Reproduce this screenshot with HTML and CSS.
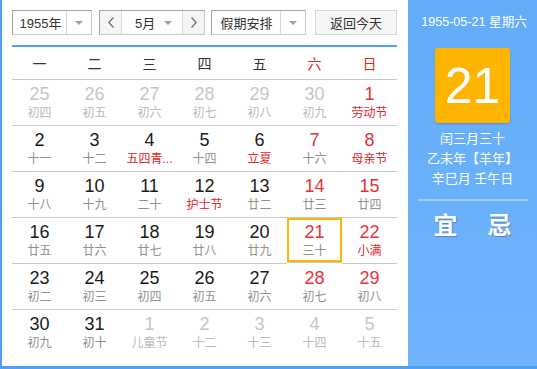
FILE: index.html
```html
<!DOCTYPE html>
<html lang="zh-CN">
<head>
  <meta charset="UTF-8">
  <title>万年历</title>
  <link rel="stylesheet" href="styles.css">
</head>
<body>

<div class="cal">
  <!-- left: month grid -->
  <div class="main">
    <div class="toolbar">
      <div class="sel year">
        <span class="sel-text">1955年</span>
        <span class="sel-arrow"><i class="tri"></i></span>
      </div>
      <div class="sel month">
        <span class="nav"><svg width="6" height="11" viewBox="0 0 6 11"><polyline points="5.5,0.5 0.8,5.5 5.5,10.5" fill="none" stroke="#666" stroke-width="1.1"/></svg></span>
        <span class="sel-text">5月</span>
        <span class="mini-arrow"><i class="tri"></i></span>
        <span class="nav"><svg width="6" height="11" viewBox="0 0 6 11"><polyline points="0.5,0.5 5.2,5.5 0.5,10.5" fill="none" stroke="#666" stroke-width="1.1"/></svg></span>
      </div>
      <div class="sel holiday">
        <span class="sel-text">假期安排</span>
        <span class="sel-arrow"><i class="tri"></i></span>
      </div>
      <button class="today-btn">返回今天</button>
    </div>

    <div class="week">
      <span>一</span><span>二</span><span>三</span><span>四</span><span>五</span><span class="wkend">六</span><span class="wkend">日</span>
    </div>

    <div class="grid">
      <div class="day other"><b>25</b><em>初四</em></div>
      <div class="day other"><b>26</b><em>初五</em></div>
      <div class="day other"><b>27</b><em>初六</em></div>
      <div class="day other"><b>28</b><em>初七</em></div>
      <div class="day other"><b>29</b><em>初八</em></div>
      <div class="day other"><b>30</b><em>初九</em></div>
      <div class="day red"><b>1</b><em class="fest">劳动节</em></div>

      <div class="day"><b>2</b><em>十一</em></div>
      <div class="day"><b>3</b><em>十二</em></div>
      <div class="day"><b>4</b><em class="fest">五四青...</em></div>
      <div class="day"><b>5</b><em>十四</em></div>
      <div class="day"><b>6</b><em class="fest">立夏</em></div>
      <div class="day red"><b>7</b><em>十六</em></div>
      <div class="day red"><b>8</b><em class="fest">母亲节</em></div>

      <div class="day"><b>9</b><em>十八</em></div>
      <div class="day"><b>10</b><em>十九</em></div>
      <div class="day"><b>11</b><em>二十</em></div>
      <div class="day"><b>12</b><em class="fest">护士节</em></div>
      <div class="day"><b>13</b><em>廿二</em></div>
      <div class="day red"><b>14</b><em>廿三</em></div>
      <div class="day red"><b>15</b><em>廿四</em></div>

      <div class="day"><b>16</b><em>廿五</em></div>
      <div class="day"><b>17</b><em>廿六</em></div>
      <div class="day"><b>18</b><em>廿七</em></div>
      <div class="day"><b>19</b><em>廿八</em></div>
      <div class="day"><b>20</b><em>廿九</em></div>
      <div class="day red now"><b>21</b><em>三十</em></div>
      <div class="day red"><b>22</b><em class="fest">小满</em></div>

      <div class="day"><b>23</b><em>初二</em></div>
      <div class="day"><b>24</b><em>初三</em></div>
      <div class="day"><b>25</b><em>初四</em></div>
      <div class="day"><b>26</b><em>初五</em></div>
      <div class="day"><b>27</b><em>初六</em></div>
      <div class="day red"><b>28</b><em>初七</em></div>
      <div class="day red"><b>29</b><em>初八</em></div>

      <div class="day last"><b>30</b><em>初九</em></div>
      <div class="day last"><b>31</b><em>初十</em></div>
      <div class="day last other"><b>1</b><em>儿童节</em></div>
      <div class="day last other"><b>2</b><em>十二</em></div>
      <div class="day last other"><b>3</b><em>十三</em></div>
      <div class="day last other"><b>4</b><em>十四</em></div>
      <div class="day last other"><b>5</b><em>十五</em></div>
    </div>
  </div>

  <!-- right: selected day -->
  <div class="side">
    <div class="side-date">1955-05-21 星期六</div>
    <div class="big-day">21</div>
    <div class="lunar">
      <p>闰三月三十</p>
      <p>乙未年【羊年】</p>
      <p>辛巳月 壬午日</p>
    </div>
    <div class="yiji"><span>宜</span><span>忌</span></div>
  </div>
</div>

</body>
</html>
```

FILE: styles.css
```css
*{box-sizing:border-box}
body{margin:0;overflow:hidden;background:#fff;font-family:"Liberation Sans","Noto Sans CJK SC",sans-serif;color:#222}
.cal{display:flex;width:537px;height:369px;border-left:2px solid #4f9ff4;border-bottom:3px solid #4f9ff4}

.main{width:406px;padding:10px 11px 0 10px}
.toolbar{display:flex;height:25px;margin-bottom:10px}
.sel{display:flex;height:25px;border:1px solid #c9c9c9;border-top-color:#a6a6a6;border-left-color:#a6a6a6;font-size:13px;color:#333;background:#fff}
.sel-text{flex:1;display:flex;align-items:center;justify-content:center}
.sel-arrow{width:25px;border-left:1px solid #d8d8d8;display:flex;align-items:center;justify-content:center}
.tri{display:block;width:0;height:0;border-left:4px solid transparent;border-right:4px solid transparent;border-top:4px solid #a0a0a0}
.year{width:80px}
.year .sel-text{padding-left:2px}
.month{width:106px;margin-left:7px}
.month .sel-text{justify-content:flex-start;padding-left:13px}
.mini-arrow{width:18px;display:flex;align-items:center;justify-content:flex-start}
.nav{width:22px;background:#f5f5f5;display:flex;align-items:center;justify-content:center}
.nav:first-child{border-right:1px solid #d8d8d8}
.nav:last-child{border-left:1px solid #d8d8d8}
.holiday{width:95px;margin-left:6px}
.holiday .sel-text{padding-left:1px}
.today-btn{width:82px;height:25px;margin-left:9px;padding:0;border:1px solid #d6d6d6;background:#f6f6f6;font-family:inherit;font-size:13px;color:#333}

.week{display:grid;grid-template-columns:repeat(7,55px);height:35px;border-top:2px solid #4fa2f6;border-bottom:1px solid #c8c8c8}
.week span{display:flex;align-items:center;justify-content:center;font-size:14px;color:#333}
.week .wkend{color:#e3262c}

.grid{display:grid;grid-template-columns:repeat(7,55px)}
.day{height:46px;border-bottom:1px solid #c8c8c8;display:flex;flex-direction:column;align-items:center;padding-top:4px}
.day.last{border-bottom:none}
.day b{font-weight:normal;font-size:18px;line-height:20px;color:#1a1a1a}
.day em{font-style:normal;font-size:12px;line-height:19px;color:#8f8f8f}
.day.red b{color:#e4323a}
.day .fest{color:#e3262c}
.day.other b{color:#c6c6c6}
.day.other em{color:#b9b9b9}
.day.now{height:45px;box-shadow:inset 0 0 0 2px #ffb700}

.side{flex:1;background:linear-gradient(#62acf8,#70b5fd);color:#fff;display:flex;flex-direction:column;align-items:center;padding-top:14px}
.side-date{font-size:12.6px;line-height:16px;padding-left:3px}
.big-day{width:75px;height:75px;margin-top:18px;background:#ffb500;border-radius:3px;box-shadow:0 1px 2px rgba(0,0,0,.18);display:flex;align-items:center;justify-content:center;font-size:50px;color:#fff}
.lunar{margin-top:6px;text-align:center;font-size:13px}
.lunar p{margin:0;line-height:20px}
.yiji{width:110px;margin-top:10px;border-top:2px solid rgba(255,255,255,.35);display:flex;justify-content:center;gap:30px;padding-top:10px}
.yiji span{font-size:24px;font-weight:bold;line-height:30px;text-shadow:1px 1px 1px rgba(60,40,110,.35)}
```
